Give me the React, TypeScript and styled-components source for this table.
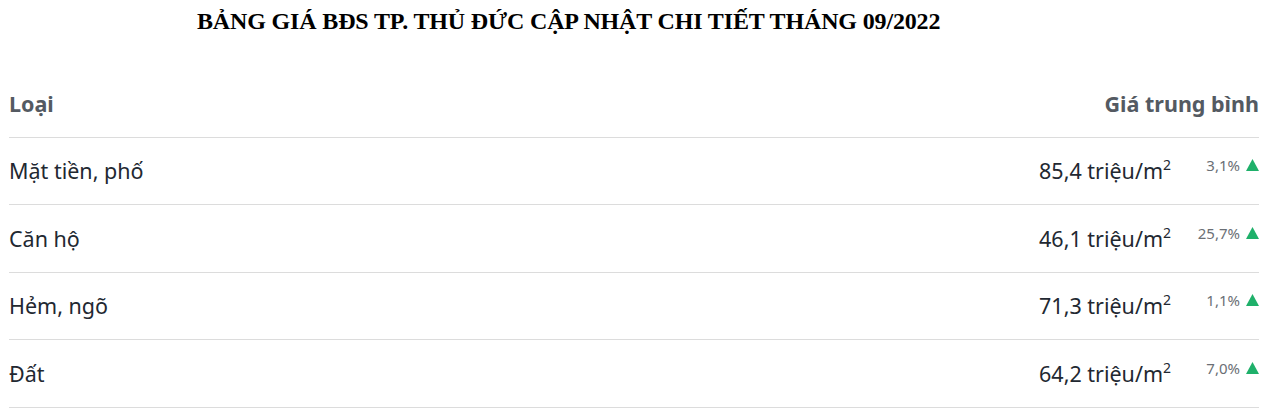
import React from 'react'
import styled, { createGlobalStyle } from 'styled-components'

const GlobalStyle = createGlobalStyle`
  body {
    margin: 0;
    background: #fff;
    font-family: "Noto Sans", "Open Sans", sans-serif;
  }
`

const Page = styled.div`
  padding: 0 8px 0 9px;
`

const Title = styled.h2`
  margin: 0;
  padding: 7px 0 0 188px;
  height: 62px;
  box-sizing: border-box;
  font-family: "Liberation Serif", "Times New Roman", serif;
  font-size: 24px;
  line-height: 28px;
  font-weight: bold;
  color: #000;
  letter-spacing: -0.15px;
  white-space: nowrap;
`

const Table = styled.div`
  display: flex;
  flex-direction: column;
`

const Row = styled.div<{ $head?: boolean }>`
  display: flex;
  align-items: center;
  justify-content: space-between;
  height: 66.5px;
  border-bottom: 1px solid #dcdcdc;
  font-size: 21.5px;
  color: ${p => (p.$head ? '#545a62' : '#222831')};
  font-weight: ${p => (p.$head ? 700 : 400)};
  ${p => p.$head && 'margin-top: 8px;'}
`

const Right = styled.div`
  display: flex;
  align-items: flex-start;
`

const Price = styled.span`
  sup {
    font-size: 14px;
    vertical-align: 9px;
    line-height: 0;
  }
`

const Change = styled.span`
  display: flex;
  align-items: center;
  justify-content: flex-end;
  gap: 6px;
  width: 88px;
  font-size: 15px;
  color: #6b6f75;
  margin-top: -1px;
  white-space: nowrap;
`

const Up = () => (
  <svg width="13" height="12" viewBox="0 0 13 12">
    <polygon points="6.5,0 13,12 0,12" fill="#1fb06a" />
  </svg>
)

const rows = [
  { name: 'Mặt tiền, phố', price: '85,4', change: '3,1%' },
  { name: 'Căn hộ', price: '46,1', change: '25,7%' },
  { name: 'Hẻm, ngõ', price: '71,3', change: '1,1%' },
  { name: 'Đất', price: '64,2', change: '7,0%' },
]

export default function App() {
  return (
    <Page>
      <GlobalStyle />
      <Title>BẢNG GIÁ BĐS TP. THỦ ĐỨC CẬP NHẬT CHI TIẾT THÁNG 09/2022</Title>
      <Table>
        <Row $head>
          <span>Loại</span>
          <span>Giá trung bình</span>
        </Row>
        {rows.map(r => (
          <Row key={r.name}>
            <span>{r.name}</span>
            <Right>
              <Price>
                {r.price} triệu/m<sup>2</sup>
              </Price>
              <Change>
                {r.change}
                <Up />
              </Change>
            </Right>
          </Row>
        ))}
      </Table>
    </Page>
  )
}
